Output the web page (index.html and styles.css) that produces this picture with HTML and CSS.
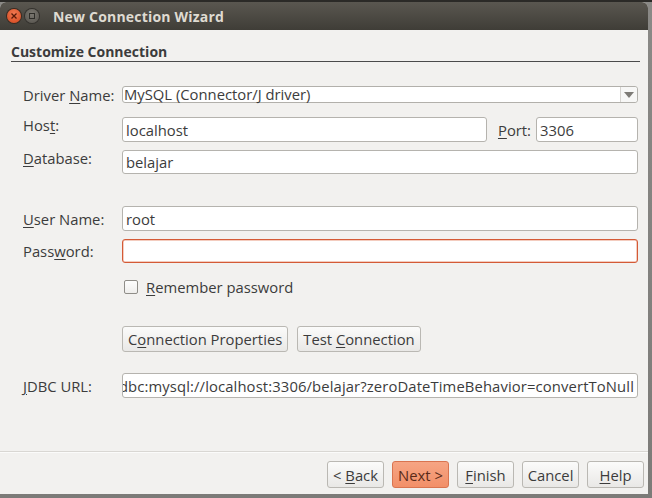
FILE: index.html
```html
<!DOCTYPE html>
<html>
<head>
<meta charset="utf-8">
<link rel="stylesheet" href="styles.css">
</head>
<body>
<div class="window">
  <div class="titlebar">
    <span class="wbtn close"><svg width="14" height="14" viewBox="0 0 14 14"><path d="M4.5 4.5 L9.5 9.5 M9.5 4.5 L4.5 9.5" stroke="#5a1a08" stroke-width="1.3" fill="none"/></svg></span>
    <span class="wbtn max"><svg width="14" height="14" viewBox="0 0 14 14"><rect x="4.5" y="4.5" width="5" height="5" fill="none" stroke="#2e2d29" stroke-width="1"/></svg></span>
    <span class="title">New Connection Wizard</span>
  </div>
  <div class="content">
    <div class="heading">Customize Connection</div>
    <div class="form">
      <div class="row r-driver">
        <span class="label">Driver <u>N</u>ame:</span>
        <div class="combo"><span class="combo-text">MySQL (Connector/J driver)</span><span class="arrow"><svg width="10" height="6" viewBox="0 0 10 6"><path d="M0 0 H10 L5 6 Z" fill="#7d7b76"/></svg></span></div>
      </div>
      <div class="row r-host">
        <span class="label">Hos<u>t</u>:</span>
        <div class="input grow"><span>localhost</span></div>
        <span class="port-label"><u>P</u>ort:</span>
        <div class="input port"><span>3306</span></div>
      </div>
      <div class="row r-db">
        <span class="label"><u>D</u>atabase:</span>
        <div class="input grow"><span>belajar</span></div>
      </div>
      <div class="row r-user">
        <span class="label"><u>U</u>ser Name:</span>
        <div class="input grow"><span>root</span></div>
      </div>
      <div class="row r-pass">
        <span class="label">Pass<u>w</u>ord:</span>
        <div class="input grow error"></div>
      </div>
      <div class="row r-check">
        <span class="label"></span>
        <span class="checkbox"></span>
        <span class="check-text"><u>R</u>emember password</span>
      </div>
      <div class="row r-buttons">
        <span class="label"></span>
        <span class="btn"><span>C<u>o</u>nnection Properties</span></span>
        <span class="btn"><span>Test <u>C</u>onnection</span></span>
      </div>
      <div class="row r-url">
        <span class="label"><u>J</u>DBC URL:</span>
        <div class="input grow url"><span class="url-text">jdbc:mysql://localhost:3306/belajar?zeroDateTimeBehavior=convertToNull</span></div>
      </div>
    </div>
    <div class="separator"></div>
    <div class="footer">
      <span class="btn fbtn"><span>&lt; <u>B</u>ack</span></span>
      <span class="btn fbtn next"><span>Next &gt;</span></span>
      <span class="btn fbtn"><span><u>F</u>inish</span></span>
      <span class="btn fbtn"><span>Cancel</span></span>
      <span class="btn fbtn"><span><u>H</u>elp</span></span>
    </div>
  </div>
</div>
</body>
</html>
```
FILE: styles.css
```css
html, body {
  margin: 0;
  padding: 0;
}
body {
  width: 652px;
  height: 498px;
  background: linear-gradient(to bottom, #2b2a27 0, #2b2a27 2px, #8a8986 2px, #7c7b78 100%);
  font-family: "Open Sans", "DejaVu Sans", sans-serif;
  font-size: 14.8px;
  color: #3c3c3c;
  overflow: hidden;
}
.window {
  width: 648px;
  height: 492px;
  margin-top: 2px;
  background: #f2f1ef;
  border-radius: 6px 6px 0 0;
  display: flex;
  flex-direction: column;
  overflow: hidden;
}
.titlebar {
  height: 28px;
  flex: none;
  background: linear-gradient(to bottom, #5a5750, #3f3d37);
  display: flex;
  align-items: center;
  padding-left: 7px;
}
.wbtn {
  width: 14px;
  height: 14px;
  border-radius: 50%;
  display: flex;
  margin-right: 4px;
}
.close {
  background: radial-gradient(circle at 50% 35%, #f27a52, #d4451b);
  box-shadow: 0 0 0 1px #3a2a20;
}
.max {
  background: radial-gradient(circle at 50% 35%, #7a7770, #55524c);
  box-shadow: 0 0 0 1px #33312d;
}
.title {
  margin-left: 10px;
  font-weight: bold;
  font-size: 14px;
  color: #dfdbd2;
  letter-spacing: 0.2px;
}
.content {
  flex: 1;
  display: flex;
  flex-direction: column;
}
.heading {
  margin: 12px 8px 0 11px;
  font-weight: bold;
  font-size: 14px;
  color: #3c3c3c;
  line-height: 19px;
  border-bottom: 1px solid #4b4b4b;
  padding-bottom: 0;
}
.form {
  padding-left: 23px;
  padding-right: 10px;
  display: flex;
  flex-direction: column;
}
.row {
  display: flex;
  align-items: center;
}
.label {
  width: 99px;
  flex: none;
  white-space: nowrap;
}
.r-driver { margin-top: 24px; height: 17px; }
.r-host { margin-top: 14px; height: 25px; }
.r-db { margin-top: 8px; height: 24px; }
.r-user { margin-top: 32px; height: 25px; }
.r-pass { margin-top: 8px; height: 24px; }
.r-check { margin-top: 17px; height: 13px; }
.r-buttons { margin-top: 33px; height: 26px; }
.r-url { margin-top: 21px; height: 25px; }
.r-host .label, .r-db .label { align-self: flex-start; margin-top: -2px; }
.combo {
  flex: 1;
  height: 17px;
  box-sizing: border-box;
  border: 1px solid #b2b0ab;
  border-radius: 3px;
  background: #ffffff;
  display: flex;
  align-items: center;
}
.combo-text {
  flex: 1;
  padding-left: 1px;
  white-space: nowrap;
  line-height: 15px;
}
.arrow {
  width: 16px;
  height: 100%;
  border-left: 1px solid #d6d4d0;
  display: flex;
  align-items: center;
  justify-content: center;
  background: #f7f7f6;
  border-radius: 0 3px 3px 0;
}
.input {
  height: 100%;
  box-sizing: border-box;
  border: 1px solid #b5b3ae;
  border-radius: 3px;
  background: #ffffff;
  display: flex;
  align-items: center;
  padding-left: 3px;
  white-space: nowrap;
  overflow: hidden;
}
.grow { flex: 1; }
.port-label {
  margin-left: 11px;
  margin-right: 5px;
}
.port {
  width: 102px;
  flex: none;
}
.error {
  border-color: #d45a36;
  box-shadow: inset 0 0 0 0.5px #e89a80;
}
.url {
  padding-left: 0;
  justify-content: flex-end;
  padding-right: 3px;
}
.url-text {
  flex: none;
  letter-spacing: 0.12px;
}
.checkbox {
  width: 12px;
  height: 12px;
  margin-left: 2px;
  border: 1px solid #8f8d88;
  border-radius: 2px;
  background: linear-gradient(#fdfdfd, #efeeec);
  flex: none;
}
.check-text {
  margin-left: 8px;
}
.btn {
  display: inline-flex;
  align-items: center;
  justify-content: center;
  box-sizing: border-box;
  height: 26px;
  padding: 0 5px;
  border: 1px solid #bab8b3;
  border-radius: 3px;
  background: linear-gradient(#fbfbfa, #e9e8e6);
  white-space: nowrap;
  margin-right: 9px;
}
.separator {
  margin-top: 53px;
  height: 1px;
  background: #d9d7d3;
  border-bottom: 1px solid #fbfbfa;
}
.footer {
  margin-top: 8px;
  display: flex;
  justify-content: flex-end;
  padding-right: 4px;
}
.fbtn {
  width: 57px;
  height: 27px;
  margin-right: 0;
  margin-left: 8px;
  padding: 0;
}
.next {
  background: linear-gradient(#f6a584, #f28f68);
  border-color: #d97450;
  color: #5a2a18;
}
u {
  text-decoration: underline;
  text-underline-offset: 2px;
}
```
